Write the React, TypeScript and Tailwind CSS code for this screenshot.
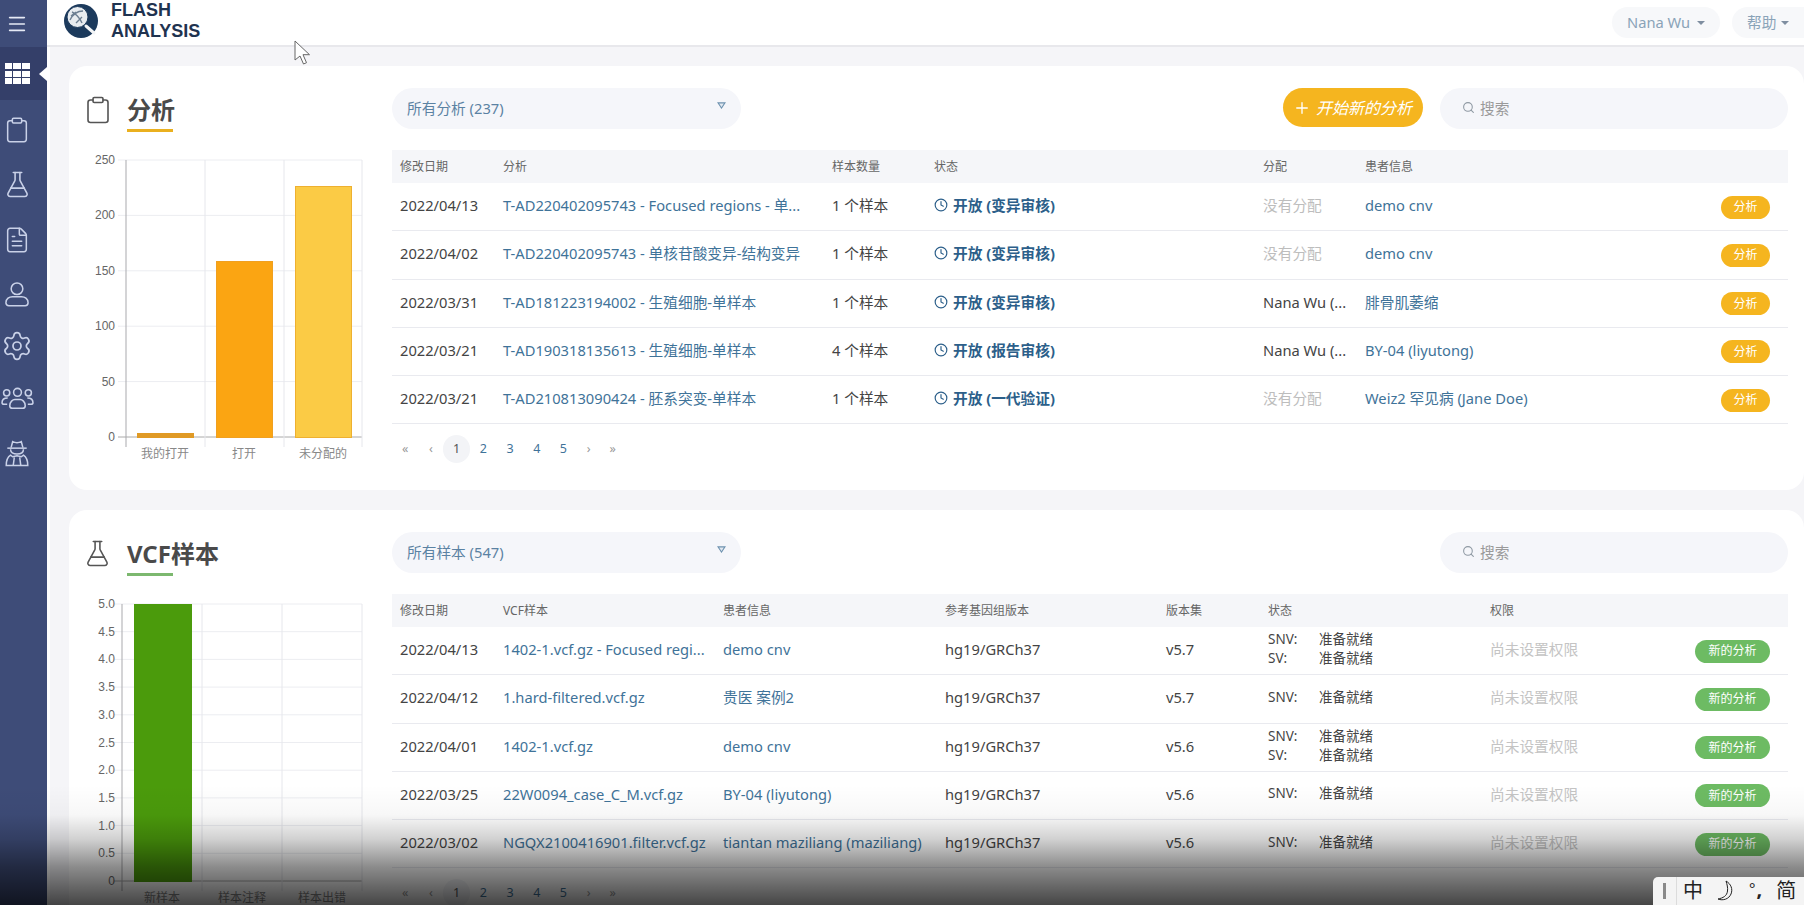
import { ReactNode } from "react";
import { Clipboard, Clock, FileText, FlaskConical, Menu, Plus, Search, Settings } from "lucide-react";

const analyses = [
  { date: "2022/04/13", name: "T-AD220402095743 - Focused regions - 单...", count: "1 个样本", status: "开放 (变异审核)", owner: "", patient: "demo cnv" },
  { date: "2022/04/02", name: "T-AD220402095743 - 单核苷酸变异-结构变异", count: "1 个样本", status: "开放 (变异审核)", owner: "", patient: "demo cnv" },
  { date: "2022/03/31", name: "T-AD181223194002 - 生殖细胞-单样本", count: "1 个样本", status: "开放 (变异审核)", owner: "Nana Wu (...", patient: "腓骨肌萎缩" },
  { date: "2022/03/21", name: "T-AD190318135613 - 生殖细胞-单样本", count: "4 个样本", status: "开放 (报告审核)", owner: "Nana Wu (...", patient: "BY-04 (liyutong)" },
  { date: "2022/03/21", name: "T-AD210813090424 - 胚系突变-单样本", count: "1 个样本", status: "开放 (一代验证)", owner: "", patient: "Weiz2 罕见病 (Jane Doe)" },
];

const samples = [
  { date: "2022/04/13", name: "1402-1.vcf.gz - Focused regi...", patient: "demo cnv", version: "v5.7", sv: true },
  { date: "2022/04/12", name: "1.hard-filtered.vcf.gz", patient: "贵医 案例2", version: "v5.7", sv: false },
  { date: "2022/04/01", name: "1402-1.vcf.gz", patient: "demo cnv", version: "v5.6", sv: true },
  { date: "2022/03/25", name: "22W0094_case_C_M.vcf.gz", patient: "BY-04 (liyutong)", version: "v5.6", sv: false },
  { date: "2022/03/02", name: "NGQX2100416901.filter.vcf.gz", patient: "tiantan maziliang (maziliang)", version: "v5.6", sv: false },
];

const UserIcon = () => (
  <svg viewBox="0 0 24 24" className="w-[28px] h-[28px]" fill="none" stroke="currentColor" strokeWidth="1.3">
    <circle cx="12" cy="7.5" r="5" />
    <path d="M2.500 19.500c0-3.500 3-5.200 5.500-5.200h8c2.500 0 5.500 1.700 5.500 5.200 0 1.800-1 2.500-2.500 2.500H5c-1.500 0-2.500-.7-2.500-2.500z" />
  </svg>
);

const UsersIcon = () => (
  <svg viewBox="0 0 32 24" className="w-[33px] h-[25px]" fill="none" stroke="currentColor" strokeWidth="1.5">
    <circle cx="16" cy="6" r="3.800" />
    <circle cx="5.500" cy="6.500" r="3" />
    <circle cx="26.500" cy="6.500" r="3" />
    <path d="M8.500 19c0-4 3-6 5-6h5c2 0 5 2 5 6 0 1.500-1 2.500-2.500 2.500H11c-1.500 0-2.500-1-2.500-2.500z" />
    <path d="M6.500 11.500c-3 0-5.500 1.500-5.500 4.500 0 .8.500 1.500 2 1.500h3" />
    <path d="M25.500 11.500c3 0 5.500 1.500 5.500 4.500 0 .8-.5 1.500-2 1.500h-3" />
  </svg>
);

const SpyIcon = () => (
  <svg viewBox="0 0 24 26" className="w-[26px] h-[28px]" fill="none" stroke="currentColor" strokeWidth="1.4">
    <path d="M6.500 8l1.500-5.500c2.500 1.200 5.500 1.200 8 0L17.500 8" />
    <path d="M3 8.500h18" />
    <path d="M6 9.500c0 2.800 2.500 4.500 6 4.500s6-1.700 6-4.500" />
    <path d="M2 24.500c0-4 .8-7.500 4-9.500l2 1.500 4-1 4 1 2-1.500c3.200 2 4 5.500 4 9.500z" />
    <path d="M9.500 17l-1 7.500M14.500 17l1 7.500" />
  </svg>
);

const sideIcons = [
  { icon: <Clipboard className="w-[28px] h-[28px]" strokeWidth={1.3} />, h: 55 },
  { icon: <FlaskConical className="w-[29px] h-[29px]" strokeWidth={1.3} />, h: 55 },
  { icon: <FileText className="w-[28px] h-[28px]" strokeWidth={1.3} />, h: 55 },
  { icon: <UserIcon />, h: 53 },
  { icon: <Settings className="w-[32px] h-[32px]" strokeWidth={1.3} />, h: 51 },
  { icon: <UsersIcon />, h: 54 },
  { icon: <SpyIcon />, h: 56 },
];

const Sidebar = () => (
  <aside className="w-[47px] shrink-0 bg-[#3e4c78] text-[#c9d1e8] flex flex-col">
    <div className="h-[47px] flex items-center justify-center pr-[13px]">
      <Menu className="w-[22px] h-[22px] text-[#e6eaf5]" strokeWidth={1.8} />
    </div>
    <div className="relative h-[53px] bg-[#343f69] flex items-center justify-center pr-[13px]">
      <div className="grid grid-cols-3 gap-[1.500px] w-[25px]">
        {Array.from({ length: 9 }).map((_, i) => (
          <span key={i} className="h-[6px] bg-white" />
        ))}
      </div>
      <span className="absolute right-0 top-[20px] border-y-[7px] border-r-[8px] border-y-transparent border-r-white" />
    </div>
    <div className="pt-[2px]">
      {sideIcons.map((s, i) => (
        <div key={i} className="flex items-center justify-center pr-[13px]" style={{ height: s.h }}>
          {s.icon}
        </div>
      ))}
    </div>
  </aside>
);

const Logo = () => (
  <svg viewBox="0 0 36 36" className="w-[36px] h-[36px] -mt-[3px]">
    <circle cx="18" cy="18" r="17" fill="#1c3a5c" />
    <circle cx="14.500" cy="14" r="10.500" fill="#e8ecf0" />
    <circle cx="14.500" cy="14" r="10.500" fill="none" stroke="#1c3a5c" strokeWidth="1" />
    <path d="M7 17c3-6 8-9 13-9M9 9c3 1 8 6 10 11M8 13l5-4M13 20l6-6" stroke="#6d7f92" strokeWidth="1.400" fill="none" />
    <path d="M23 23l8 7" stroke="#f2f4f6" strokeWidth="3" strokeLinecap="round" />
  </svg>
);

const Header = () => (
  <header className="h-[47px] shrink-0 bg-white border-b-2 border-[#e8e8ec] flex items-center pl-[16px]">
    <Logo />
    <div className="ml-[12px] -mt-[3px] font-['Liberation_Sans',sans-serif] font-bold text-[18px] leading-[21px] text-[#1f3350]">
      <div>FLASH</div>
      <div>ANALYSIS</div>
    </div>
    <div className="ml-auto flex items-center gap-[12px] text-[#8aa3b8] text-[14.700px]">
      <div className="h-[31px] w-[108px] rounded-full bg-[#f7f8fa] flex items-center pl-[15px] gap-[7px]">
        Nana Wu <Caret />
      </div>
      <div className="h-[31px] w-[72px] rounded-l-full bg-[#f7f8fa] flex items-center pl-[15px] gap-[5px]">
        帮助 <Caret />
      </div>
    </div>
  </header>
);

const Caret = () => (
  <span className="border-x-[4px] border-t-[4px] border-x-transparent border-t-[#7f8ea0]" />
);

const SelectBox = ({ label }: { label: string }) => (
  <div className="h-[41px] w-[349px] rounded-full bg-[#f5f6fa] flex items-center justify-between pl-[15px] pr-[15px] text-[#5b82a3]">
    <span>{label}</span>
    <svg viewBox="0 0 10 8" className="w-[9px] h-[7px] -mt-[7px]">
      <path d="M1 1h8L5 7z" fill="#e2e8f0" stroke="#6f93b0" strokeWidth="1.200" />
    </svg>
  </div>
);

const SearchBox = () => (
  <div className="h-[41px] w-[348px] rounded-full bg-[#f5f6fa] flex items-center pl-[22px] gap-[5px] text-[#9a9a9a]">
    <Search className="w-[13px] h-[13px] -mt-[2px] text-[#8f99a3]" strokeWidth={2} />
    <span>搜索</span>
  </div>
);

const Pagination = () => (
  <div className="h-[28px] mt-[11px] text-[12.500px] text-[#3f7399]">
    <div className="flex items-center h-full pl-[10px]">
      <span className="w-[25px] text-[#999]">«</span>
      <span className="w-[16px] pl-[2px] text-[#999]">‹</span>
      <span className="w-[27px] h-[28px] rounded-full bg-[#f3f4f7] flex items-center justify-center text-[#555]">1</span>
      {[2, 3, 4, 5].map((n) => (
        <span key={n} className="w-[26.700px] text-center">{n}</span>
      ))}
      <span className="w-[24px] text-center text-[#999]">›</span>
      <span className="w-[24px] text-center text-[#999]">»</span>
    </div>
  </div>
);

const Th = ({ w, children }: { w: string; children?: ReactNode }) => <div className={w}>{children}</div>;

const AnalysisTable = () => (
  <div>
    <div className="h-[33px] bg-[#f5f6f9] flex items-center text-[12px] text-[#666]">
      <Th w="w-[111px] pl-[8px]">修改日期</Th>
      <Th w="w-[329px]">分析</Th>
      <Th w="w-[102px]">样本数量</Th>
      <Th w="w-[329px]">状态</Th>
      <Th w="w-[102px]">分配</Th>
      <Th w="flex-1">患者信息</Th>
    </div>
    {analyses.map((a, i) => (
      <div key={i} className="h-[48.250px] flex items-center pb-[3px] border-b border-[#e9eaef] text-[#444] whitespace-nowrap">
        <div className="w-[111px] pl-[8px]">{a.date}</div>
        <div className="w-[329px] text-[#3f7399]">{a.name}</div>
        <div className="w-[102px]">{a.count}</div>
        <div className="w-[329px] flex items-center gap-[5px] font-bold text-[#2c5f8a]">
          <Clock className="w-[14px] h-[14px]" strokeWidth={2} />
          {a.status}
        </div>
        <div className={a.owner ? "w-[102px]" : "w-[102px] text-[#bdbdbd]"}>
          {a.owner || "没有分配"}
        </div>
        <div className="flex-1 text-[#3f7399]">{a.patient}</div>
        <button className="w-[49px] h-[23px] mr-[18px] mt-[4px] rounded-full bg-[#f5b51f] text-white text-[12px]">分析</button>
      </div>
    ))}
    <Pagination />
  </div>
);

const SampleTable = () => (
  <div>
    <div className="h-[33px] bg-[#f5f6f9] flex items-center text-[12px] text-[#666]">
      <Th w="w-[111px] pl-[8px]">修改日期</Th>
      <Th w="w-[220px]">VCF样本</Th>
      <Th w="w-[222px]">患者信息</Th>
      <Th w="w-[221px]">参考基因组版本</Th>
      <Th w="w-[102px]">版本集</Th>
      <Th w="w-[222px]">状态</Th>
      <Th w="flex-1">权限</Th>
    </div>
    {samples.map((s, i) => (
      <div key={i} className="h-[48.250px] flex items-center pb-[3px] border-b border-[#e9eaef] text-[#444] whitespace-nowrap">
        <div className="w-[111px] pl-[8px]">{s.date}</div>
        <div className="w-[220px] text-[#3f7399]">{s.name}</div>
        <div className="w-[222px] text-[#3f7399]">{s.patient}</div>
        <div className="w-[221px]">hg19/GRCh37</div>
        <div className="w-[102px]">{s.version}</div>
        <div className="w-[222px] text-[13.500px] leading-[19px]">
          <div className="flex"><span className="w-[51px]">SNV:</span>准备就绪</div>
          {s.sv && <div className="flex"><span className="w-[51px]">SV:</span>准备就绪</div>}
        </div>
        <div className="flex-1 text-[#c4c4c4]">尚未设置权限</div>
        <button className="w-[75px] h-[23px] mr-[18px] mt-[4px] rounded-full bg-[#6dbb63] text-white text-[12px]">新的分析</button>
      </div>
    ))}
    <Pagination />
  </div>
);

type Bar = { x: number; w: number; top: number; fill: string; stroke: string };

const Chart = ({
  axisX,
  verticals,
  ticks,
  bars,
  labels,
}: {
  axisX: number;
  verticals: number[];
  ticks: string[];
  bars: Bar[];
  labels: { x: number; text: string }[];
}) => {
  const top = 10;
  const bottom = 287;
  const right = 293;
  const step = (bottom - top) / (ticks.length - 1);
  return (
    <svg viewBox="0 0 323 320" className="w-[323px] h-[320px] block">
      {ticks.map((t, i) => {
        const y = top + i * step;
        return (
          <g key={t}>
            <line x1={axisX - 8} x2={right} y1={y} y2={y} stroke={i === ticks.length - 1 ? "#aaa" : "#ecedf1"} />
            <text x={46} y={y + 4} textAnchor="end" fontSize="12" fill="#666" fontFamily="Liberation Sans">
              {t}
            </text>
          </g>
        );
      })}
      {verticals.map((x) => (
        <line key={x} x1={x} x2={x} y1={top} y2={bottom + 10} stroke="#e6e7ec" />
      ))}
      <line x1={axisX} x2={axisX} y1={top} y2={bottom + 10} stroke="#a9a9ad" />
      {bars.map((b) => (
        <rect key={b.x} x={b.x + 0.5} y={b.top + 0.5} width={b.w} height={bottom - b.top} fill={b.fill} stroke={b.stroke} />
      ))}
      {labels.map((l) => (
        <text key={l.x} x={l.x} y={308} textAnchor="middle" fontSize="12" fill="#888" fontFamily="Noto Sans CJK SC">
          {l.text}
        </text>
      ))}
    </svg>
  );
};

const Panel = ({
  icon,
  title,
  accent,
  chart,
  filter,
  action,
  table,
}: {
  icon: ReactNode;
  title: string;
  accent: string;
  chart: ReactNode;
  filter: string;
  action?: ReactNode;
  table: ReactNode;
}) => (
  <section className="h-[424px] shrink-0 rounded-[18px] bg-white flex overflow-hidden">
    <div className="w-[323px] shrink-0">
      <div className="h-[84px] pt-[29px] pl-[14px] flex items-start text-[#555]">
        <div className="w-[44px]">{icon}</div>
        <div>
          <div className="text-[24px] leading-[30px] font-bold text-[#4a4a4a]">{title}</div>
          <div className={`w-[46px] h-[3px] mt-[4px] ${accent}`} />
        </div>
      </div>
      {chart}
    </div>
    <div className="flex-1 pr-[16px]">
      <div className="h-[84px] pt-[22px] flex items-start">
        <SelectBox label={filter} />
        <div className="ml-auto flex items-start gap-[17px]">
          {action}
          <SearchBox />
        </div>
      </div>
      {table}
    </div>
  </section>
);

const StartButton = () => (
  <button className="w-[140px] h-[39px] rounded-full bg-[#f5b51f] text-white flex items-center pl-[10px] gap-[5px]">
    <Plus className="w-[18px] h-[18px]" strokeWidth={1.8} />
    <span className="italic text-[16px]">开始新的分析</span>
  </button>
);

// video controls fade and the desktop input method bar sit over the page
const ImeBar = () => (
  <div className="absolute right-0 bottom-0 z-20 h-[28px] w-[151px] rounded-tl-[5px] bg-[#f4f4f4] flex items-center text-[#222] text-[20px] leading-none pl-[10px]">
    <span className="w-[3px] h-[16px] bg-[#8a8a8a]" />
    <span className="h-full w-px bg-[#dcdcdc] ml-[10px]" />
    <span className="ml-[6px]">中</span>
    <svg viewBox="0 0 20 22" className="w-[20px] h-[22px] ml-[13px]" fill="none" stroke="#222" strokeWidth="1">
      <path d="M10 1c5 3 7 8 5 13s-8 7-13 5c5-1 9-3 9.500-8C12 8 11 4 10 1z" />
    </svg>
    <span className="ml-[13px] text-[15px] -mt-[6px]">°</span>
    <span className="ml-[1px] font-bold text-[20px] -mt-[4px]">,</span>
    <span className="ml-[14px]">简</span>
  </div>
);

const Cursor = () => (
  <svg viewBox="0 0 17 25" className="absolute left-[294px] top-[40px] z-10 w-[17px] h-[25px]">
    <path d="M1 1v19l5-4 3.500 8 3-1.300-3.500-8h6.500z" fill="#fff" stroke="#666" strokeWidth="1" />
  </svg>
);

export default function App() {
  return (
    <div className="relative h-[905px] w-[1804px] overflow-hidden flex font-['Noto_Sans','Noto_Sans_CJK_SC',sans-serif] text-[14.700px] bg-[#f5f5f8]">
      <Sidebar />
      <div className="flex-1 flex flex-col min-w-0">
        <Header />
        <main className="flex-1 pt-[19px] pl-[19px] border-l-[3px] border-white flex flex-col gap-[20px]">
          <Panel
            icon={<Clipboard className="w-[30px] h-[30px]" strokeWidth={1.300} />}
            title="分析"
            accent="bg-[#eab01f]"
            filter="所有分析 (237)"
            action={<StartButton />}
            chart={
              <Chart
                axisX={57}
                verticals={[136, 215, 293]}
                ticks={["250", "200", "150", "100", "50", "0"]}
                bars={[
                  { x: 68, w: 56, top: 283, fill: "#e09a25", stroke: "#e09a25" },
                  { x: 147, w: 56, top: 111, fill: "#fba512", stroke: "#f0a020" },
                  { x: 226, w: 56, top: 36, fill: "#fbcb45", stroke: "#eeb030" },
                ]}
                labels={[
                  { x: 96, text: "我的打开" },
                  { x: 175, text: "打开" },
                  { x: 254, text: "未分配的" },
                ]}
              />
            }
            table={<AnalysisTable />}
          />
          <Panel
            icon={<FlaskConical className="w-[29px] h-[29px]" strokeWidth={1.300} />}
            title="VCF样本"
            accent="bg-[#7cb86f]"
            filter="所有样本 (547)"
            chart={
              <Chart
                axisX={53}
                verticals={[133, 213, 293]}
                ticks={["5.0", "4.5", "4.0", "3.5", "3.0", "2.5", "2.0", "1.5", "1.0", "0.5", "0"]}
                bars={[{ x: 65, w: 57, top: 10, fill: "#4b9b0c", stroke: "#4b9b0c" }]}
                labels={[
                  { x: 93, text: "新样本" },
                  { x: 173, text: "样本注释" },
                  { x: 253, text: "样本出错" },
                ]}
              />
            }
            table={<SampleTable />}
          />
        </main>
      </div>
      <Cursor />
      <div className="absolute inset-x-0 bottom-0 h-[120px] pointer-events-none bg-[linear-gradient(to_bottom,rgba(0,0,0,0)_0%,rgba(0,0,0,0.03)_25%,rgba(0,0,0,0.18)_45%,rgba(0,0,0,0.45)_68%,rgba(0,0,0,0.73)_100%)]" />
      <ImeBar />
    </div>
  );
}
